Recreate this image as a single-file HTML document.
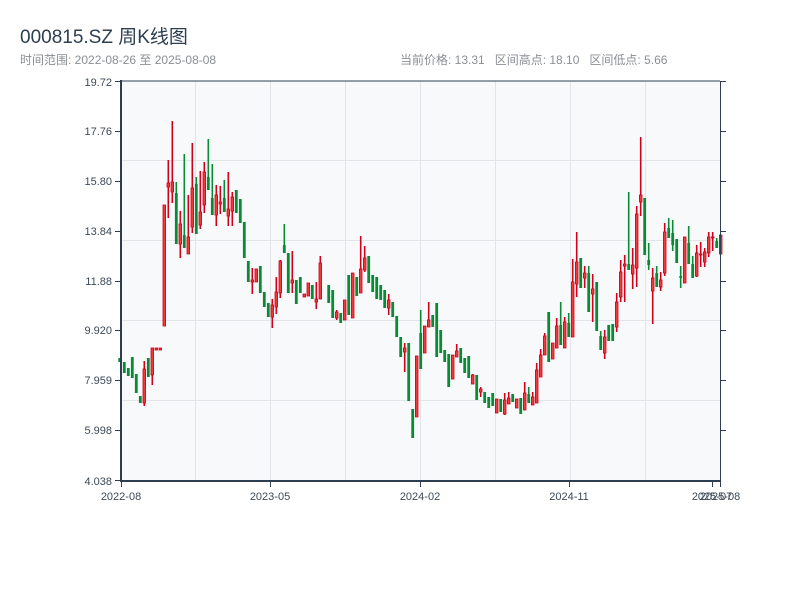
<!DOCTYPE html>
<html><head><meta charset="utf-8"><style>
html,body{margin:0;padding:0;background:#fff;width:800px;height:600px;overflow:hidden;font-family:"Liberation Sans","Noto Sans CJK SC",sans-serif}
.t{position:absolute;white-space:nowrap}
</style></head><body>
<div class="t" style="left:20px;top:22px;font-size:19px;color:#2c3e50">000815.SZ 周K线图</div>
<div class="t" style="left:20px;top:51px;font-size:12px;color:#8a8f94">时间范围: 2022-08-26 至 2025-08-08</div>
<div class="t" style="left:400px;top:51px;font-size:12px;color:#8a8f94">当前价格: 13.31&nbsp;&nbsp; 区间高点: 18.10&nbsp;&nbsp; 区间低点: 5.66</div>
<svg id="s" width="800" height="600" style="position:absolute;left:0;top:0" xmlns="http://www.w3.org/2000/svg">
<rect x="121" y="81" width="599" height="400" fill="#f7f9fb"/>
<g stroke="#e1e5ea" stroke-width="1">
<line x1="121" x2="720" y1="160.5" y2="160.5"/><line x1="121" x2="720" y1="240.5" y2="240.5"/><line x1="121" x2="720" y1="320.5" y2="320.5"/><line x1="121" x2="720" y1="400.5" y2="400.5"/>
<line y1="81" y2="481" x1="195.5" x2="195.5"/><line y1="81" y2="481" x1="270.5" x2="270.5"/><line y1="81" y2="481" x1="345.5" x2="345.5"/><line y1="81" y2="481" x1="420.5" x2="420.5"/><line y1="81" y2="481" x1="495.5" x2="495.5"/><line y1="81" y2="481" x1="570.5" x2="570.5"/><line y1="81" y2="481" x1="645.5" x2="645.5"/>
</g>
<g id="c"></g>
<g stroke="#2c3e50" fill="none">
<line x1="121" y1="80" x2="121" y2="482" stroke-width="2"/>
<line x1="120" y1="481" x2="721" y2="481" stroke-width="2"/>
<line x1="120" y1="81" x2="720" y2="81" stroke-width="1"/>
<line x1="720.5" y1="81" x2="720.5" y2="481" stroke-width="1"/>
<g stroke-width="1">
<line x1="115" x2="121" y1="81.5" y2="81.5"/><line x1="115" x2="121" y1="131.5" y2="131.5"/><line x1="115" x2="121" y1="181.5" y2="181.5"/><line x1="115" x2="121" y1="231.5" y2="231.5"/><line x1="115" x2="121" y1="281.5" y2="281.5"/><line x1="115" x2="121" y1="330.5" y2="330.5"/><line x1="115" x2="121" y1="380.5" y2="380.5"/><line x1="115" x2="121" y1="430.5" y2="430.5"/><line x1="115" x2="121" y1="480.5" y2="480.5"/>
<line x1="720" x2="726" y1="81.5" y2="81.5"/><line x1="720" x2="726" y1="131.5" y2="131.5"/><line x1="720" x2="726" y1="181.5" y2="181.5"/><line x1="720" x2="726" y1="231.5" y2="231.5"/><line x1="720" x2="726" y1="281.5" y2="281.5"/><line x1="720" x2="726" y1="330.5" y2="330.5"/><line x1="720" x2="726" y1="380.5" y2="380.5"/><line x1="720" x2="726" y1="430.5" y2="430.5"/>
<line y1="481" y2="487" x1="121.5" x2="121.5"/><line y1="481" y2="487" x1="270.5" x2="270.5"/><line y1="481" y2="487" x1="420.5" x2="420.5"/><line y1="481" y2="487" x1="569.5" x2="569.5"/><line y1="481" y2="487" x1="712.5" x2="712.5"/><line y1="481" y2="487" x1="720.5" x2="720.5"/>
</g></g>
<g font-size="11" fill="#3d4a57" text-anchor="end" font-family="Liberation Sans, sans-serif">
<text x="112" y="86">19.72</text><text x="112" y="135">17.76</text><text x="112" y="185">15.80</text><text x="112" y="235">13.84</text><text x="112" y="285">11.88</text><text x="112" y="334">9.920</text><text x="112" y="384">7.959</text><text x="112" y="434">5.998</text><text x="112" y="485">4.038</text>
</g>
<g font-size="11" fill="#3d4a57" text-anchor="middle" font-family="Liberation Sans, sans-serif">
<text x="121" y="500">2022-08</text><text x="270" y="500">2023-05</text><text x="420" y="500">2024-02</text><text x="569" y="500">2024-11</text><text x="712" y="500">2025-07</text><text x="720" y="500">2025-08</text>
</g>
</svg>
<script>
var z3=[[14,'g',358,362],[28,'g',362,373],[40,'g',368,376],[52,'g',357,378],[64,'g',374,393],[76,'g',396,403],[88,'r',369,403,361,406],[100,'g',358,377],[112,'r',348,375,348,385],[124,'r',348,350],[136,'r',348,350],[148,'r',205,326],[160,'r',183,187,160,218],[172,'r',182,192,121,203],[184,'g',193,244,182,244],[196,'r',224,244,211,258],[208,'g',235,248,154,248],[220,'r',237,254,195,254],[232,'r',188,227,143,233],[244,'g',184,234,177,234],[256,'r',212,225,171,229],[268,'r',172,205,162,213],[280,'g',177,190,139,190],[292,'g',198,215,164,215],[304,'r',195,215,185,226],[316,'r',202,204,186,214],[328,'g',198,212,180,212],[340,'r',209,216,172,226],[352,'r',197,211,192,226],[364,'g',190,213],[376,'g',199,223],[388,'g',222,258],[400,'g',261,282],[412,'r',280,282,268,294],[424,'r',269,282],[436,'g',266,293],[448,'g',292,307],[460,'g',303,317],[472,'r',305,317,299,328],[484,'r',292,307,277,314],[496,'r',261,293,260,298],[508,'g',245,253,224,253],[520,'g',253,293],[532,'r',280,283,251,293],[544,'g',280,304],[556,'g',277,293],[568,'r',294,297],[580,'r',283,296],[592,'g',285,299],[604,'r',299,302,282,309],[616,'r',263,299,256,299]];
var z4=[[26,'g',285,303],[38,'g',290,318],[50,'r',312,318,310,320],[62,'g',313,323],[74,'r',300,320],[86,'g',275,315],[98,'r',273,318],[110,'g',277,296],[122,'r',269,293,236,293],[134,'r',258,270,246,272],[146,'g',256,283],[158,'g',275,292],[170,'g',277,299],[182,'g',285,300],[194,'g',290,308],[206,'r',300,308,294,315],[218,'g',302,317],[230,'g',316,337],[242,'g',337,357],[254,'r',348,352,343,372],[266,'g',343,401],[278,'g',409,438],[290,'r',356,417],[302,'g',333,369,310,369],[314,'r',326,353],[326,'r',320,327,302,327],[338,'g',315,327],[350,'g',303,357],[362,'g',330,353],[374,'g',350,362],[386,'g',354,387],[398,'r',355,379],[410,'r',351,357,344,357],[422,'g',348,363],[434,'g',358,373],[446,'g',356,378],[458,'r',375,384,374,384],[470,'g',375,400],[482,'r',389,392,387,397],[494,'g',392,403],[506,'g',397,408],[518,'g',393,406],[530,'r',399,413],[542,'g',399,412],[554,'r',400,414,393,415],[566,'r',398,404,392,404],[578,'g',394,402],[590,'r',399,408]];
var z5=[[2,'g',398,414],[14,'r',393,410,382,410],[26,'g',394,403,387,403],[38,'r',397,405,392,405],[50,'r',370,403,363,403],[62,'r',355,377,349,377],[74,'r',336,355,333,355],[86,'g',312,362],[98,'r',343,359],[110,'r',326,348,318,348],[122,'g',325,345,302,345],[134,'r',322,348,317,348],[146,'g',323,337,313,337],[158,'r',282,337,259,337],[170,'r',262,284,232,297],[182,'g',258,288],[194,'r',273,278,266,288],[206,'g',273,312,266,312],[218,'r',289,294,274,322],[230,'g',282,331],[242,'g',336,350,331,350],[254,'r',337,353,330,359],[266,'g',325,341],[278,'g',324,341],[290,'r',302,327,293,332],[302,'r',272,297,260,302],[314,'r',264,266,255,302],[326,'g',264,270,192,270],[338,'r',265,274,248,289],[350,'r',214,268,206,287],[362,'r',195,202,137,216],[374,'g',198,255],[386,'g',260,265,243,270],[398,'r',278,291,268,324],[410,'g',273,287,266,287],[422,'r',280,287,272,291],[434,'r',232,273,223,276],[446,'g',228,238,218,238],[458,'g',233,245,220,251],[470,'g',239,263],[482,'g',276,278,266,288],[494,'r',237,283],[506,'g',243,264,226,264],[518,'g',264,278,256,278],[530,'r',253,276,245,277],[542,'r',254,255,242,267],[554,'r',252,262,248,267],[566,'r',237,253,232,257],[578,'r',237,238,232,251],[590,'g',241,248,238,248],[602,'r',235,254,235,254]];
var out='';
function add(x,d){var c=d[1],bt=d[2],bb=d[3],wt=d.length>4?d[4]:bt,wb=d.length>5?d[5]:bb;
var col=c=='r'?'#d0021b':'#0b8a36';
out+='<rect x="'+(x-0.8).toFixed(1)+'" y="'+wt+'" width="1.6" height="'+Math.max(1,wb-wt)+'" fill="'+col+'"/>';
if(c=='r')out+='<rect x="'+(x-1.3).toFixed(1)+'" y="'+bt+'" width="2.6" height="'+Math.max(1,bb-bt)+'" fill="#ee3b3b" stroke="#d0021b" stroke-width="0.8"/>';
else out+='<rect x="'+(x-1.4).toFixed(1)+'" y="'+bt+'" width="2.8" height="'+Math.max(1,bb-bt)+'" fill="#0b8a36"/>';}
z3.forEach(function(d){add(115+d[0]/3,d)});
z4.forEach(function(d){add(320+d[0]/3,d)});
z5.forEach(function(d){add(520+d[0]/3,d)});
document.getElementById('c').innerHTML=out;
</script>
</body></html>
